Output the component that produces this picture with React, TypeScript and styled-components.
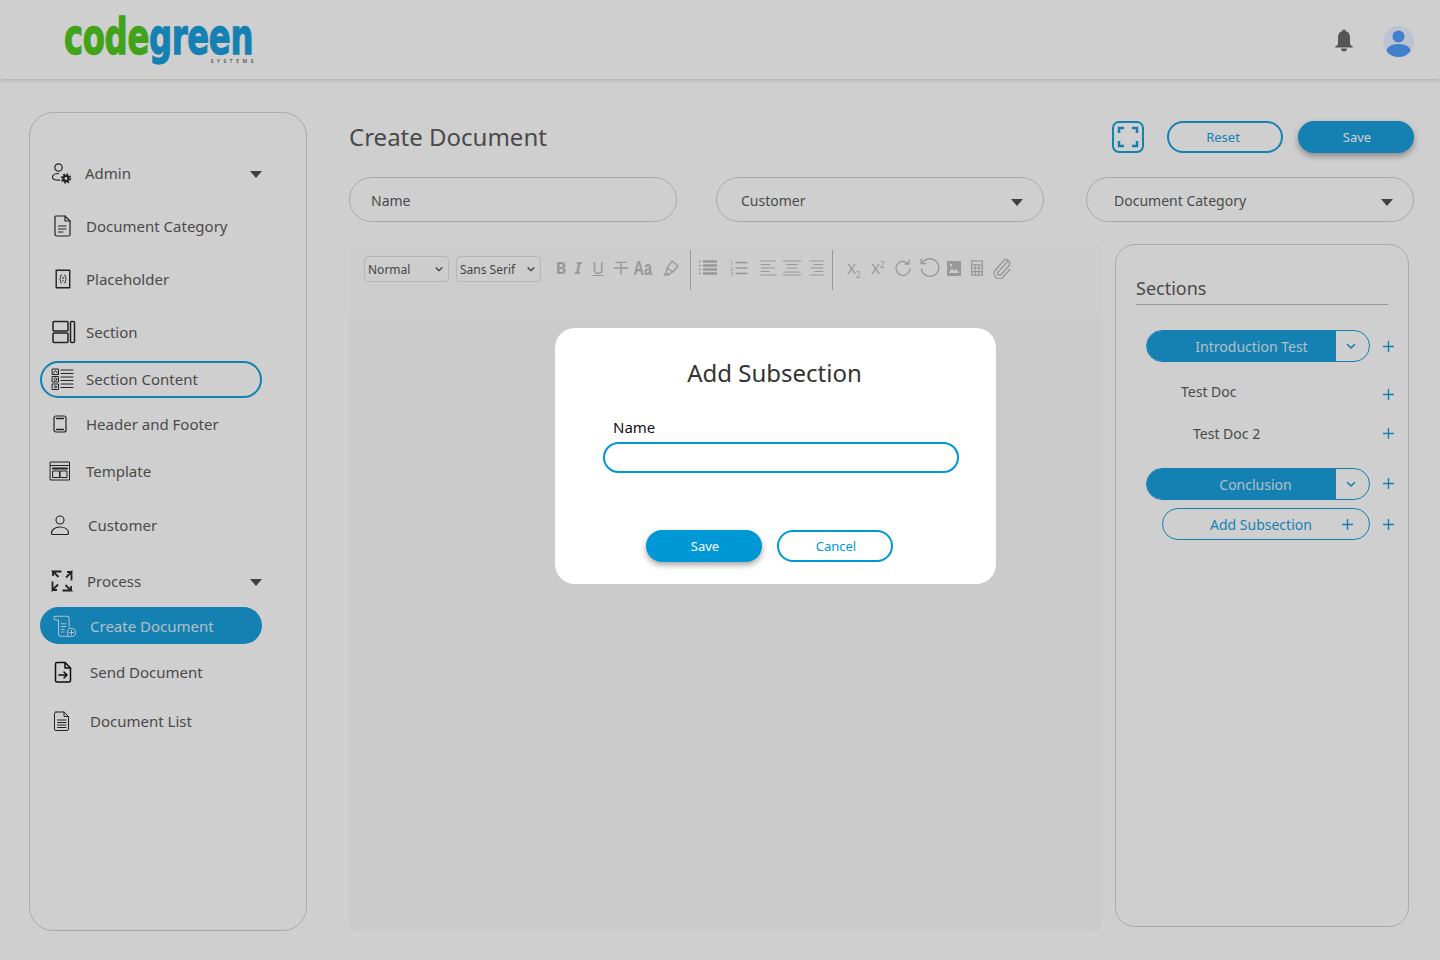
import React from 'react';
import styled, { createGlobalStyle } from 'styled-components';

const PRIMARY = '#1b9fdc';
const MODAL_BLUE = '#0097d6';
const TEXT = '#5c5c5c';
const LINE = '#d2d2d2';
const TOOL = '#bcbcbc';

const GlobalStyle = createGlobalStyle`
  html, body {
    margin: 0;
    height: 100%;
    background: #fff;
    overflow: hidden;
    font-family: "Noto Sans", "Open Sans", sans-serif;
    color: ${TEXT};
  }
  * { box-sizing: border-box; }
`;

const Page = styled.div`
  width: 1440px;
  height: 960px;
`;

const Header = styled.header`
  height: 79px;
  display: flex;
  align-items: center;
  justify-content: space-between;
  padding: 3px 26px 0 64px;
  box-shadow: 0 1px 4px rgba(0, 0, 0, 0.18);
`;

const Logo = styled.div`
  position: relative;
  width: 190px;
  height: 44px;
  white-space: nowrap;
`;

const LogoWord = styled.div`
  font-family: "DejaVu Sans", sans-serif;
  font-weight: 700;
  font-size: 46px;
  line-height: 33px;
  transform: scale(0.702, 1.1);
  transform-origin: left top;
  letter-spacing: -0.5px;
  -webkit-text-stroke: 1.2px currentColor;
`;

const LogoPart = styled.span<{ $color: string }>`
  color: ${(p) => p.$color};
`;

const Tagline = styled.span`
  position: absolute;
  right: 0;
  bottom: -1px;
  font-size: 5px;
  line-height: 6px;
  letter-spacing: 3.6px;
  margin-right: -3px;
  color: #333;
`;

const HeaderIcons = styled.div`
  display: flex;
  align-items: center;
  gap: 29px;
`;

const Body = styled.div`
  display: flex;
  gap: 42px;
  padding: 33px 26px 0 29px;
`;

const Sidebar = styled.nav`
  width: 278px;
  height: 819px;
  flex: none;
  border: 1px solid ${LINE};
  border-radius: 24px;
  padding: 42px 10px 0;
`;

const NavRow = styled.div<{ $gap: number; $pad: number; $lift: number; $active?: boolean; $outlined?: boolean }>`
  position: relative;
  display: flex;
  align-items: center;
  width: 222px;
  height: 37px;
  margin-top: ${(p) => p.$gap}px;
  padding: 0 0 ${(p) => p.$lift}px ${(p) => p.$pad}px;
  border-radius: 19px;
  font-size: 15px;
  color: ${(p) => (p.$active ? '#dcecf4' : TEXT)};
  background: ${(p) => (p.$active ? PRIMARY : 'transparent')};
  border: ${(p) => (p.$outlined ? `2px solid ${PRIMARY}` : 'none')};
`;

const NavIcon = styled.span<{ $textGap: number }>`
  width: 24px;
  height: 24px;
  flex: none;
  display: flex;
  align-items: center;
  justify-content: center;
  margin-right: ${(p) => p.$textGap}px;
`;

const Caret = styled.span`
  width: 0;
  height: 0;
  margin: 4px 0 0 auto;
  border-left: 6.5px solid transparent;
  border-right: 6.5px solid transparent;
  border-top: 7px solid #505050;
`;

const Main = styled.main`
  width: 1065px;
  flex: none;
`;

const TitleRow = styled.div`
  display: flex;
  align-items: center;
  height: 32px;
  margin-top: 9px;
`;

const Title = styled.h1`
  margin: 0;
  padding-bottom: 2px;
  font-size: 24px;
  font-weight: 400;
  flex: 1;
`;

const FullscreenButton = styled.button`
  width: 32px;
  height: 32px;
  padding: 0;
  display: flex;
  align-items: center;
  justify-content: center;
  border: 2px solid ${PRIMARY};
  border-radius: 7px;
  background: transparent;
  margin-right: 23px;
`;

const ActionButton = styled.button<{ $filled?: boolean; $blue?: string; $nudge?: number }>`
  width: 116px;
  height: 32px;
  padding: 0 ${(p) => (p.$nudge && p.$nudge < 0 ? -p.$nudge : 0)}px 0 ${(p) => (p.$nudge && p.$nudge > 0 ? p.$nudge : 0)}px;
  border-radius: 16px;
  font-family: inherit;
  font-size: 13px;
  border: 2px solid ${(p) => p.$blue ?? PRIMARY};
  background: ${(p) => (p.$filled ? p.$blue ?? PRIMARY : 'transparent')};
  color: ${(p) => (p.$filled ? '#fff' : p.$blue ?? PRIMARY)};
  box-shadow: ${(p) => (p.$filled ? '0 3px 6px rgba(0, 0, 0, 0.35)' : 'none')};
`;

const TopActions = styled.div`
  display: flex;
  gap: 15px;
`;

const FilterRow = styled.div`
  display: flex;
  margin-top: 24px;
`;

const Filter = styled.div<{ $pad: number; $left?: number }>`
  width: 328px;
  height: 45px;
  display: flex;
  align-items: center;
  margin-left: ${(p) => p.$left ?? 0}px;
  padding: 2px 20px 0 ${(p) => p.$pad}px;
  border: 1px solid ${LINE};
  border-radius: 23px;
  font-size: 14px;
`;

const Workspace = styled.div`
  display: flex;
  gap: 14px;
  margin-top: 22px;
`;

const Editor = styled.section`
  width: 752px;
  height: 687px;
  background: #fafafa;
  border-radius: 8px;
`;

const Toolbar = styled.div`
  height: 72px;
  display: flex;
  align-items: flex-start;
  padding: 6px 0 0 15px;
  background: #fdfdfd;
  border-radius: 8px 8px 0 0;
`;

const FakeSelect = styled.div`
  width: 85px;
  height: 26px;
  margin: 6px 7px 0 0;
  padding: 0 4px 0 3px;
  display: flex;
  align-items: center;
  justify-content: space-between;
  border: 1px solid #e0e0e0;
  border-radius: 4px;
  font-size: 12px;
  color: #555;
`;

const Tool = styled.span<{ $w: number; $left?: number }>`
  width: ${(p) => p.$w}px;
  height: 26px;
  margin-top: 5px;
  margin-left: ${(p) => p.$left ?? 0}px;
  flex: none;
  display: flex;
  align-items: center;
  justify-content: center;
  font-size: 15px;
  color: ${TOOL};
`;

const ToolLetter = styled.span<{ $bold?: boolean; $italic?: boolean; $under?: boolean; $size?: number }>`
  font-weight: ${(p) => (p.$bold ? 700 : 400)};
  font-style: ${(p) => (p.$italic ? 'italic' : 'normal')};
  font-size: ${(p) => p.$size ?? 16}px;
  line-height: 1;
  text-decoration: ${(p) => (p.$under ? 'underline' : 'none')};
`;

const CaseLetters = styled.span`
  display: block;
  font-family: "Liberation Sans", sans-serif;
  font-weight: 700;
  font-size: 20px;
  line-height: 1;
  transform: scaleX(0.72);
  white-space: nowrap;
`;

const ToolScript = styled.sub`
  font-size: 8px;
  line-height: 0;
`;

const ToolSuper = styled.sup`
  font-size: 8px;
  line-height: 0;
`;

const ToolDivider = styled.span<{ $left: number }>`
  width: 1px;
  height: 40px;
  flex: none;
  margin-left: ${(p) => p.$left}px;
  background: #bdbdbd;
`;

const SectionsPanel = styled.aside`
  width: 294px;
  height: 683px;
  border: 1px solid ${LINE};
  border-radius: 20px;
  padding: 31px 20px 0 20px;
`;

const SectionsTitle = styled.h2`
  margin: 0;
  height: 29px;
  font-size: 18px;
  line-height: 25px;
  font-weight: 400;
  border-bottom: 1px solid #b8b8b8;
`;

const SectionRow = styled.div<{ $top: number }>`
  display: flex;
  align-items: center;
  margin-top: ${(p) => p.$top}px;
  padding-left: 10px;
`;

const SplitPill = styled.div`
  width: 224px;
  height: 32px;
  flex: none;
  display: flex;
  border: 1px solid ${PRIMARY};
  border-radius: 16px;
  overflow: hidden;
`;

const PillLabel = styled.div<{ $shift: number }>`
  width: 189px;
  display: flex;
  align-items: center;
  justify-content: center;
  padding-left: ${(p) => p.$shift}px;
  background: ${PRIMARY};
  color: #dcecf4;
  font-size: 14px;
`;

const PillToggle = styled.div`
  flex: 1;
  display: flex;
  align-items: center;
  justify-content: center;
  padding-right: 3px;
`;

const DocName = styled.div<{ $indent: number }>`
  width: 224px;
  flex: none;
  padding-left: ${(p) => p.$indent}px;
  font-size: 14px;
`;

const AddPill = styled.div`
  width: 208px;
  height: 32px;
  flex: none;
  margin-left: 16px;
  padding: 0 15px 0 47px;
  display: flex;
  align-items: center;
  justify-content: space-between;
  border: 1px solid ${PRIMARY};
  border-radius: 16px;
  color: ${PRIMARY};
  font-size: 14px;
`;

const PlusSlot = styled.span<{ $drop?: number }>`
  width: 13px;
  height: 13px;
  margin-left: 12px;
  flex: none;
  display: flex;
  transform: translateY(${(p) => p.$drop ?? 0}px);
`;

const Overlay = styled.div`
  position: fixed;
  inset: 0;
  background: rgba(0, 0, 0, 0.19);
`;

const Modal = styled.div`
  position: fixed;
  left: 555px;
  top: 328px;
  width: 441px;
  height: 256px;
  padding: 28px 37px 0 48px;
  background: #fff;
  border-radius: 20px;
`;

const ModalTitle = styled.h3`
  margin: 0 0 0 -13px;
  text-align: center;
  font-size: 24px;
  line-height: 33px;
  font-weight: 400;
  color: #333;
`;

const FieldLabel = styled.label`
  display: block;
  margin: 28px 0 5px 10px;
  font-size: 15px;
  line-height: 20px;
  color: #111;
`;

const NameInput = styled.input`
  display: block;
  width: 356px;
  height: 31px;
  padding: 0 14px;
  border: 2px solid ${MODAL_BLUE};
  border-radius: 16px;
  outline: none;
  background: #fff;
`;

const ModalActions = styled.div`
  display: flex;
  gap: 15px;
  margin: 57px 0 0 43px;
`;

const Stroke = ({ children, size = 24, color = '#2b2b2b', width = 1.2, box = 24 }: {
  children: React.ReactNode; size?: number; color?: string; width?: number; box?: number;
}) => (
  <svg width={size} height={size} viewBox={`0 0 ${box} ${box}`} fill="none" stroke={color} strokeWidth={width} strokeLinecap="round" strokeLinejoin="round">
    {children}
  </svg>
);

const AdminIcon = () => (
  <Stroke>
    <circle cx="9.500" cy="6.500" r="3.700" />
    <path d="M9.500 12.500c-3 0-6 1.300-6 3.500 0 1.900 2.400 3.200 6 3.200h1" />
    <circle cx="17" cy="17.500" r="3.800" fill="#2b2b2b" stroke="none" />
    <circle cx="17" cy="17.500" r="4.500" stroke="#2b2b2b" strokeWidth="1.500" strokeDasharray="1.800 1.730" strokeLinecap="butt" />
    <circle cx="17" cy="17.500" r="1.400" fill="#fff" stroke="none" />
  </Stroke>
);

const DocIcon = () => (
  <Stroke>
    <path d="M6 2h9l5 5v13.500a1.500 1.500 0 0 1-1.500 1.500h-12A1.500 1.500 0 0 1 5 20.500V3a1 1 0 0 1 1-1z" />
    <path d="M15 2v5h5M8.500 12h7.500M8.500 15h7.500M8.500 18h4.500" />
  </Stroke>
);

const PlaceholderIcon = () => (
  <Stroke width={1.4}>
    <rect x="5.200" y="3.200" width="13.500" height="17.500" />
    <path d="M10.500 8c-1 0-1 .9-1 1.800 0 1.300-.5 2-.8 2.200.3.200.8.900.8 2.200 0 .9 0 1.800 1 1.800M13.500 8c1 0 1 .9 1 1.800 0 1.300.5 2 .8 2.200-.3.200-.8.900-.8 2.200 0 .9 0 1.800-1 1.800M12 10v1.800M12 13.500v.5" strokeWidth="1" />
  </Stroke>
);

const SectionIcon = () => (
  <Stroke size={24} width={1.500}>
    <rect x="1" y="1.500" width="15" height="9.500" rx="1" />
    <rect x="1" y="13" width="15" height="9.500" rx="1" />
    <rect x="18.500" y="1.500" width="4" height="21" rx="1" />
  </Stroke>
);

const SectionContentIcon = () => (
  <Stroke width={1}>
    <rect x="1.500" y="2" width="6" height="5.500" />
    <rect x="1.500" y="9.500" width="6" height="5.500" />
    <rect x="1.500" y="17" width="6" height="5.500" />
    <circle cx="4.500" cy="12.300" r="1.300" />
    <circle cx="4.500" cy="19.800" r="1" />
    <path d="M2.500 6l2-2.500 2 2.500" />
    <path d="M10 3h12M10 6.500h12M10 10h12M10 13.500h12M10 17h12M10 20.500h12" />
  </Stroke>
);

const HeaderFooterIcon = () => (
  <Stroke width={1.200}>
    <rect x="6" y="4" width="12" height="16" rx="2" />
    <path d="M8.500 6.500h7M8.500 17.500h7" strokeWidth="1.300" />
  </Stroke>
);

const TemplateIcon = () => (
  <Stroke width={1}>
    <rect x="2.500" y="3" width="19" height="18" />
    <path d="M2.500 6.500h19" />
    <path d="M5 9.500h14" strokeWidth="2" />
    <rect x="5" y="12" width="6.500" height="6.500" />
    <rect x="12.500" y="12" width="6.500" height="6.500" />
  </Stroke>
);

const CustomerIcon = () => (
  <Stroke width={1.100}>
    <circle cx="12" cy="7" r="4" />
    <path d="M3.500 20.500c0-4 3.500-6.500 8.500-6.500s8.500 2.500 8.500 6.500c0 .6-.4 1-1 1h-15c-.6 0-1-.4-1-1z" />
  </Stroke>
);

const ProcessIcon = () => (
  <Stroke width={1.800}>
    {[0, 90, 180, 270].map((angle) => (
      <path key={angle} d="M11.500 2.500H3L8.500 8M3 2.500V7" transform={`rotate(${angle} 12 12)`} strokeLinecap="butt" strokeLinejoin="miter" />
    ))}
  </Stroke>
);

const CreateDocIcon = () => (
  <Stroke color="#dcecf4" width={1.100} size={26} box={26}>
    <path d="M3 2.500h12c1.500 0 2.500 1 2.500 2.500v9M3 2.500C1.800 2.500 1 3.500 1 4.500s.8 2 2 2h3v15c0 1.500 1 2.500 2.500 2.500H17" />
    <path d="M9 10.500h5M9 13.500h5M9 16.500h3M9 19.500h3" />
    <circle cx="20" cy="20" r="4.500" />
    <path d="M20 17.500v5M17.500 20h5" />
  </Stroke>
);

const SendDocIcon = () => (
  <Stroke color="#111" width={1.500}>
    <path d="M6 2.500h8l5.500 5.500v12.500a1.500 1.500 0 0 1-1.500 1.500H6a1.500 1.500 0 0 1-1.500-1.500V4A1.500 1.500 0 0 1 6 2.500z" />
    <path d="M14 2.500V8h5.500M8 15h8M13 12l3 3-3 3" />
  </Stroke>
);

const DocListIcon = () => (
  <Stroke width={1}>
    <path d="M6 3h8l4.500 4.500V20a1.500 1.500 0 0 1-1.500 1.500H6A1.500 1.500 0 0 1 4.500 20V4.500A1.500 1.500 0 0 1 6 3z" />
    <path d="M14 3v4.500h4.500M7.500 11h8.500M7.500 13.500h8.500M7.500 16h8.500M7.500 18.500h8.500" />
  </Stroke>
);

const FullscreenIcon = () => (
  <Stroke color={PRIMARY} width={2.500} size={22} box={22}>
    <path d="M2 7V2h5M15 2h5v5M20 15v5h-5M7 20H2v-5" strokeLinecap="butt" strokeLinejoin="miter" />
  </Stroke>
);

const BellIcon = () => (
  <svg width="20" height="24" viewBox="0 0 20 24" fill="#696969">
    <path d="M10 0.500c1 0 1.600.7 1.700 1.600 3 .8 4.300 3.300 4.300 6.400v5.500c0 1.300.8 2.500 2.200 3.300.6.400.8.700.8 1.200H1c0-.5.200-.8.800-1.200C3.200 16.800 4 15.600 4 14.300V8.500c0-3.100 1.300-5.600 4.300-6.400.100-.9.700-1.600 1.700-1.600z" />
    <path d="M7 19.500h6c0 1.700-1.300 3-3 3s-3-1.300-3-3z" />
  </svg>
);

const AvatarIcon = () => (
  <svg width="31" height="31" viewBox="0 0 31 31">
    <defs>
      <clipPath id="avatar-clip"><circle cx="15.500" cy="15.500" r="15.500" /></clipPath>
    </defs>
    <circle cx="15.500" cy="15.500" r="15.500" fill="#ebf2ff" />
    <g clipPath="url(#avatar-clip)" fill="#4f9eff">
      <circle cx="15.500" cy="10.500" r="6" />
      <path d="M3.500 25c0-4 5-7 12-7s12 3 12 7-5 7-12 7-12-3-12-7z" />
    </g>
  </svg>
);

const Chevron = ({ size = 12, color = PRIMARY }: { size?: number; color?: string }) => (
  <Stroke size={size} color={color} width={1.600} box={12}>
    <path d="M2.500 4.500L6 8l3.500-3.500" />
  </Stroke>
);

const Plus = () => (
  <Stroke size={13} color={PRIMARY} width={1.400} box={13}>
    <path d="M6.500 1v11M1 6.500h11" strokeLinecap="butt" />
  </Stroke>
);

const ToolIcon = ({ children, size = 20 }: { children: React.ReactNode; size?: number }) => (
  <Stroke size={size} color={TOOL} width={1.300} box={20}>{children}</Stroke>
);

const navItems = [
  { label: 'Admin', icon: <AdminIcon />, gap: 0, pad: 9, textGap: 12, lift: 2, caret: true },
  { label: 'Document Category', icon: <DocIcon />, gap: 16, pad: 10, textGap: 12, lift: 2 },
  { label: 'Placeholder', icon: <PlaceholderIcon />, gap: 16, pad: 11, textGap: 11, lift: 2 },
  { label: 'Section', icon: <SectionIcon />, gap: 16, pad: 12, textGap: 10, lift: 2 },
  { label: 'Section Content', icon: <SectionContentIcon />, gap: 10, pad: 9, textGap: 11, lift: 2, outlined: true },
  { label: 'Header and Footer', icon: <HeaderFooterIcon />, gap: 8, pad: 8, textGap: 14, lift: 2 },
  { label: 'Template', icon: <TemplateIcon />, gap: 10, pad: 8, textGap: 14, lift: 2 },
  { label: 'Customer', icon: <CustomerIcon />, gap: 17, pad: 8, textGap: 16, lift: 2 },
  { label: 'Process', icon: <ProcessIcon />, gap: 18, pad: 10, textGap: 13, lift: 0, caret: true },
  { label: 'Create Document', icon: <CreateDocIcon />, gap: 8, pad: 13, textGap: 13, lift: 0, active: true },
  { label: 'Send Document', icon: <SendDocIcon />, gap: 9, pad: 11, textGap: 15, lift: 0 },
  { label: 'Document List', icon: <DocListIcon />, gap: 12, pad: 10, textGap: 16, lift: 0 },
];

export default function App() {
  return (
    <Page>
      <GlobalStyle />
      <Header>
        <Logo>
          <LogoWord>
            <LogoPart $color="#51c921">code</LogoPart>
            <LogoPart $color={PRIMARY}>green</LogoPart>
          </LogoWord>
          <Tagline>SYSTEMS</Tagline>
        </Logo>
        <HeaderIcons>
          <BellIcon />
          <AvatarIcon />
        </HeaderIcons>
      </Header>

      <Body>
        <Sidebar>
          {navItems.map((item) => (
            <NavRow key={item.label} $gap={item.gap} $pad={item.pad} $lift={item.lift} $active={item.active} $outlined={item.outlined}>
              <NavIcon $textGap={item.textGap}>{item.icon}</NavIcon>
              {item.label}
              {item.caret && <Caret />}
            </NavRow>
          ))}
        </Sidebar>

        <Main>
          <TitleRow>
            <Title>Create Document</Title>
            <FullscreenButton aria-label="Fullscreen"><FullscreenIcon /></FullscreenButton>
            <TopActions>
              <ActionButton $nudge={-4}>Reset</ActionButton>
              <ActionButton $filled $nudge={2}>Save</ActionButton>
            </TopActions>
          </TitleRow>

          <FilterRow>
            <Filter $pad={21}>Name</Filter>
            <Filter $pad={24} $left={39}>Customer<Caret /></Filter>
            <Filter $pad={27} $left={42}>Document Category<Caret /></Filter>
          </FilterRow>

          <Workspace>
            <Editor>
              <Toolbar>
                <FakeSelect>Normal<Chevron size={10} color="#555" /></FakeSelect>
                <FakeSelect>Sans Serif<Chevron size={10} color="#555" /></FakeSelect>
                <Tool $w={18} $left={4}><ToolLetter $bold>B</ToolLetter></Tool>
                <Tool $w={16}><ToolLetter $italic $bold>I</ToolLetter></Tool>
                <Tool $w={24}><ToolLetter $under>U</ToolLetter></Tool>
                <Tool $w={22}><ToolIcon size={16}><path d="M3 3h14M10 3v15M1 10h18" strokeWidth="1.800" strokeLinecap="butt" /></ToolIcon></Tool>
                <Tool $w={22}><CaseLetters>Aa</CaseLetters></Tool>
                <Tool $w={34}>
                  <ToolIcon>
                    <path d="M11 3l6 5-5 6-6-4zM6 10l-1 5 3 1 4-2M5 15l-2 2h5" />
                  </ToolIcon>
                </Tool>
                <ToolDivider $left={2} />
                <Tool $w={24} $left={5}>
                  <ToolIcon>
                    <path d="M5 3.500h14M5 7.500h14M5 11.500h14M5 15.500h14" strokeWidth="2.400" strokeLinecap="butt" />
                    <path d="M1.500 3.500h1M1.500 7.500h1M1.500 11.500h1M1.500 15.500h1" strokeWidth="1.600" />
                  </ToolIcon>
                </Tool>
                <Tool $w={38}>
                  <ToolIcon>
                    <text x="1" y="7" fontSize="6" fill={TOOL} stroke="none">1</text>
                    <text x="1" y="12.500" fontSize="6" fill={TOOL} stroke="none">2</text>
                    <text x="1" y="18" fontSize="6" fill={TOOL} stroke="none">3</text>
                    <path d="M7 4.500h11M7 10h11M7 15.500h11" />
                  </ToolIcon>
                </Tool>
                <Tool $w={22}><ToolIcon><path d="M2 3h14M2 6.500h9M2 10h14M2 13.500h8M2 17h15" strokeWidth="1.100" /></ToolIcon></Tool>
                <Tool $w={24}><ToolIcon><path d="M1 3h18M4 6.500h12M5 10h10M2 14h16M1 17h18" strokeWidth="1.100" /></ToolIcon></Tool>
                <Tool $w={24}><ToolIcon><path d="M4 3h13M8 6.500h9M5 10h12M9 13.500h8M4 17h13" strokeWidth="1.100" /></ToolIcon></Tool>
                <ToolDivider $left={4} />
                <Tool $w={24} $left={9}><ToolLetter $size={15}>X<ToolScript>2</ToolScript></ToolLetter></Tool>
                <Tool $w={24}><ToolLetter $size={15}>X<ToolSuper>2</ToolSuper></ToolLetter></Tool>
                <Tool $w={26}><ToolIcon><path d="M15 5.500A7 7 0 1 0 17 11M16 2v4h-4" /></ToolIcon></Tool>
                <Tool $w={26}><ToolIcon size={22}><path d="M4 5.500A8 8 0 1 1 3 11M3 2v4h4" /></ToolIcon></Tool>
                <Tool $w={24}>
                  <svg width="14" height="15" viewBox="0 0 14 15">
                    <rect width="14" height="15" fill={TOOL} />
                    <path d="M2 12l3-5 2 3 2-2 3 4z" fill="#fdfdfd" />
                    <circle cx="4" cy="4" r="1.200" fill="#fdfdfd" />
                  </svg>
                </Tool>
                <Tool $w={22}>
                  <ToolIcon size={18}>
                    <rect x="4" y="2" width="12" height="16" />
                    <path d="M4 6.500h12M4 10h12M4 14h12M8 6.500V18M12 6.500V18" />
                  </ToolIcon>
                </Tool>
                <Tool $w={26}>
                  <ToolIcon size={22}>
                    <path d="M16 4l-8.500 9.500a1.800 1.800 0 0 0 2.700 2.400l7-8a3.300 3.300 0 0 0-5-4.300l-7.500 8.500a4.800 4.800 0 0 0 7.200 6.300l6-7" />
                  </ToolIcon>
                </Tool>
              </Toolbar>
            </Editor>

            <SectionsPanel>
              <SectionsTitle>Sections</SectionsTitle>
              <SectionRow $top={25}>
                <SplitPill>
                  <PillLabel $shift={20}>Introduction Test</PillLabel>
                  <PillToggle><Chevron /></PillToggle>
                </SplitPill>
                <PlusSlot><Plus /></PlusSlot>
              </SectionRow>
              <SectionRow $top={20}>
                <DocName $indent={35}>Test Doc</DocName>
                <PlusSlot $drop={3}><Plus /></PlusSlot>
              </SectionRow>
              <SectionRow $top={23}>
                <DocName $indent={47}>Test Doc 2</DocName>
                <PlusSlot><Plus /></PlusSlot>
              </SectionRow>
              <SectionRow $top={25}>
                <SplitPill>
                  <PillLabel $shift={28}>Conclusion</PillLabel>
                  <PillToggle><Chevron /></PillToggle>
                </SplitPill>
                <PlusSlot $drop={-1}><Plus /></PlusSlot>
              </SectionRow>
              <SectionRow $top={8}>
                <AddPill>Add Subsection<Plus /></AddPill>
                <PlusSlot><Plus /></PlusSlot>
              </SectionRow>
            </SectionsPanel>
          </Workspace>
        </Main>
      </Body>

      <Overlay />
      <Modal>
        <ModalTitle>Add Subsection</ModalTitle>
        <FieldLabel htmlFor="subsection-name">Name</FieldLabel>
        <NameInput id="subsection-name" />
        <ModalActions>
          <ActionButton $filled $blue={MODAL_BLUE} $nudge={2}>Save</ActionButton>
          <ActionButton $blue={MODAL_BLUE} $nudge={2}>Cancel</ActionButton>
        </ModalActions>
      </Modal>
    </Page>
  );
}
